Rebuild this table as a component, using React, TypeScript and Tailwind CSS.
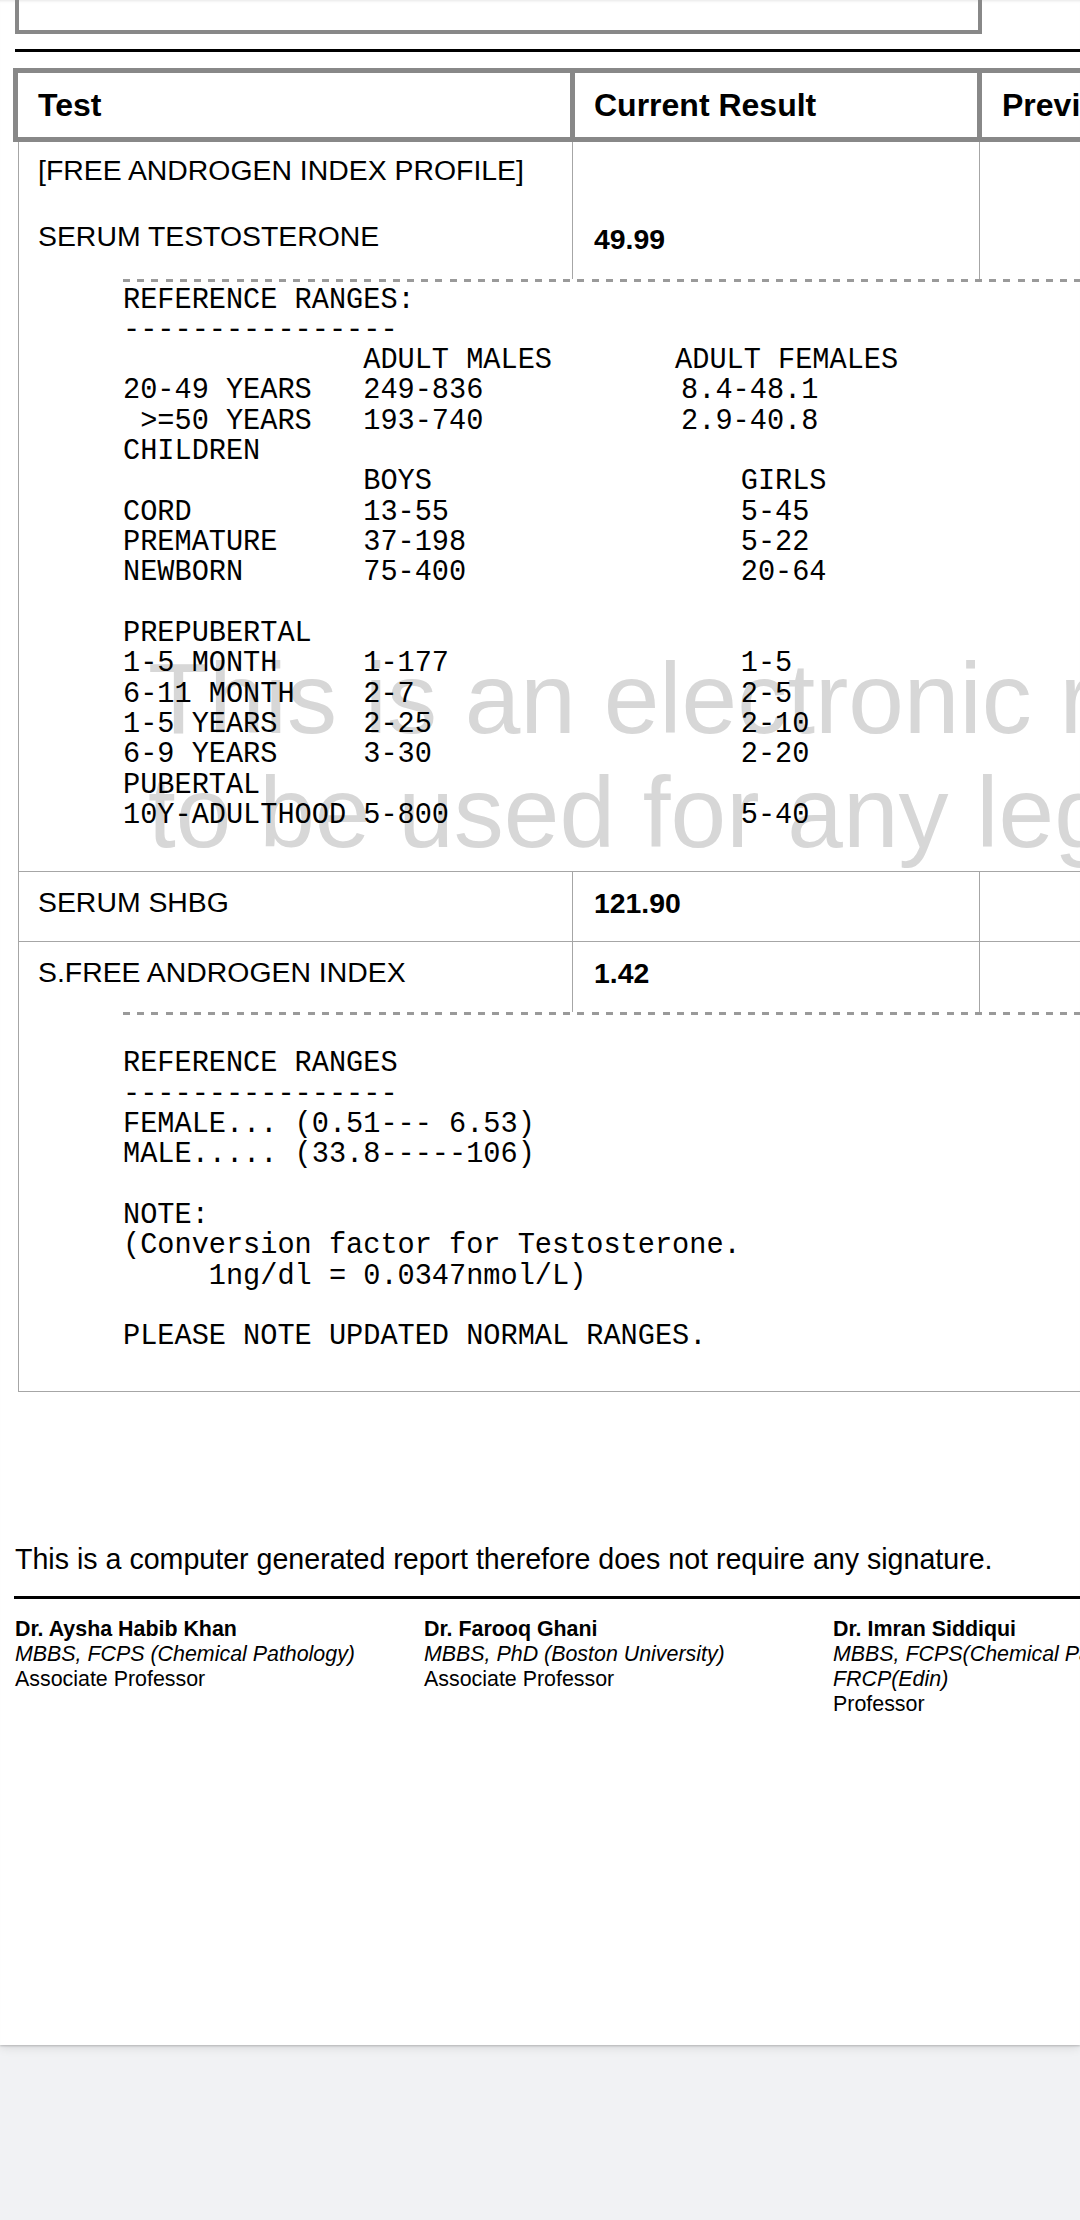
import React from "react"

const ranges2 = `
REFERENCE RANGES
----------------
FEMALE... (0.51--- 6.53)
MALE..... (33.8-----106)

NOTE:
(Conversion factor for Testosterone.
     1ng/dl = 0.0347nmol/L)

PLEASE NOTE UPDATED NORMAL RANGES.`

const doctors = [
  {
    name: "Dr. Aysha Habib Khan",
    quals: ["MBBS, FCPS (Chemical Pathology)"],
    title: "Associate Professor",
  },
  {
    name: "Dr. Farooq Ghani",
    quals: ["MBBS, PhD (Boston University)"],
    title: "Associate Professor",
  },
  {
    name: "Dr. Imran Siddiqui",
    quals: ["MBBS, FCPS(Chemical Pathology)", "FRCP(Edin)"],
    title: "Professor",
  },
]

// dashed rule above the reference text
function Dashes() {
  return (
    <div className="ml-[104px] h-[3px] bg-[image:repeating-linear-gradient(90deg,#9a9a9a_0px,#9a9a9a_7px,transparent_7px,transparent_14.2px)]" />
  )
}

const monoCls =
  "relative pl-[104px] pt-[3.5px] font-['Liberation_Mono','Courier_New',monospace] text-[28.6px] leading-[30.33px] text-black whitespace-pre"

export default function App() {
  return (
    <div className="w-[1080px] h-[2220px] overflow-hidden bg-[#f1f2f4] font-['Liberation_Sans',Arial,sans-serif] text-black">
      <div className="relative h-[2045px] overflow-hidden bg-white shadow-[inset_0_3px_3px_-2px_rgba(0,0,0,0.1),0_1px_2px_rgba(0,0,0,0.2),0_2px_10px_rgba(0,0,0,0.12)]">
        {/* watermark */}
        <div className="absolute left-[148px] top-[641px] whitespace-nowrap text-[100px] leading-[114px] text-[#d7d7d7]">
          <div>This is an electronic report and is not</div>
          <div>to be used for any legal purposes</div>
        </div>

        {/* box from previous section */}
        <div className="relative ml-[15px] w-[967px] h-[34px] border-x-4 border-b-4 border-[#888]" />

        <div className="relative mt-[15px] ml-[15px] h-[3px] bg-black" />

        {/* header */}
        <div className="relative mt-[16px] ml-[13px] w-[1300px] h-[74px] border-[5px] border-[#888] flex text-[32px] font-bold">
          <div className="w-[557px] shrink-0 border-r-[5px] border-[#888] flex items-center pl-[20px]">
            Test
          </div>
          <div className="w-[407px] shrink-0 border-r-[5px] border-[#888] flex items-center pl-[19px]">
            Current Result
          </div>
          <div className="flex-1 flex items-center pl-[20px] whitespace-nowrap">
            Previous Result
          </div>
        </div>

        {/* body */}
        <div className="relative ml-[18px] w-[1300px] border-l border-b border-[#a6a6a6] text-[28.4px] leading-[32px]">
          {/* row 1 */}
          <div className="border-b border-[#a6a6a6] pb-[40px]">
            <div className="flex h-[137px]">
              <div className="w-[554px] shrink-0 border-r border-[#a6a6a6] pl-[19px] pt-[12px]">
                <div>[FREE ANDROGEN INDEX PROFILE]</div>
                <div className="mt-[34px]">SERUM TESTOSTERONE</div>
              </div>
              <div className="w-[407px] shrink-0 border-r border-[#a6a6a6] pl-[21px] pt-[81px] font-bold">
                49.99
              </div>
              <div className="flex-1" />
            </div>
            <Dashes />
            <pre className={monoCls}>
              {`REFERENCE RANGES:
----------------
              ADULT MALES       `}
              <span className="ml-[3px]">ADULT FEMALES</span>
              {`
20-49 YEARS   249-836           `}
              <span className="ml-[9px]">8.4-48.1</span>
              {`
 >=50 YEARS   193-740           `}
              <span className="ml-[9px]">2.9-40.8</span>
              {`
CHILDREN
              BOYS                  GIRLS
CORD          13-55                 5-45
PREMATURE     37-198                5-22
NEWBORN       75-400                20-64

PREPUBERTAL
1-5 MONTH     1-177                 1-5
6-11 MONTH    2-7                   2-5
1-5 YEARS     2-25                  2-10
6-9 YEARS     3-30                  2-20
PUBERTAL
10Y-ADULTHOOD 5-800                 5-40`}
            </pre>
          </div>

          {/* row 2 */}
          <div className="flex h-[70px] border-b border-[#a6a6a6]">
            <div className="w-[554px] shrink-0 border-r border-[#a6a6a6] pl-[19px] pt-[14px]">
              SERUM SHBG
            </div>
            <div className="w-[407px] shrink-0 border-r border-[#a6a6a6] pl-[21px] pt-[15px] font-bold">
              121.90
            </div>
            <div className="flex-1" />
          </div>

          {/* row 3 */}
          <div className="pb-[38px]">
            <div className="flex h-[70px]">
              <div className="w-[554px] shrink-0 border-r border-[#a6a6a6] pl-[19px] pt-[14px]">
                S.FREE ANDROGEN INDEX
              </div>
              <div className="w-[407px] shrink-0 border-r border-[#a6a6a6] pl-[21px] pt-[15px] font-bold">
                1.42
              </div>
              <div className="flex-1" />
            </div>
            <Dashes />
            <pre className={monoCls}>{ranges2}</pre>
          </div>
        </div>

        {/* footer */}
        <div className="relative mt-[151px] ml-[15px] text-[28.6px] leading-[32px] whitespace-nowrap">
          This is a computer generated report therefore does not require any signature.
        </div>
        <div className="relative mt-[21px] ml-[14px] h-[3px] bg-black" />

        <div className="relative mt-[18px] ml-[15px] flex text-[21.4px] leading-[25px]">
          {doctors.map(d => (
            <div key={d.name} className="w-[409px] shrink-0 whitespace-nowrap">
              <div className="font-bold">{d.name}</div>
              {d.quals.map(q => (
                <div key={q} className="italic">{q}</div>
              ))}
              <div>{d.title}</div>
            </div>
          ))}
        </div>
      </div>
    </div>
  )
}
